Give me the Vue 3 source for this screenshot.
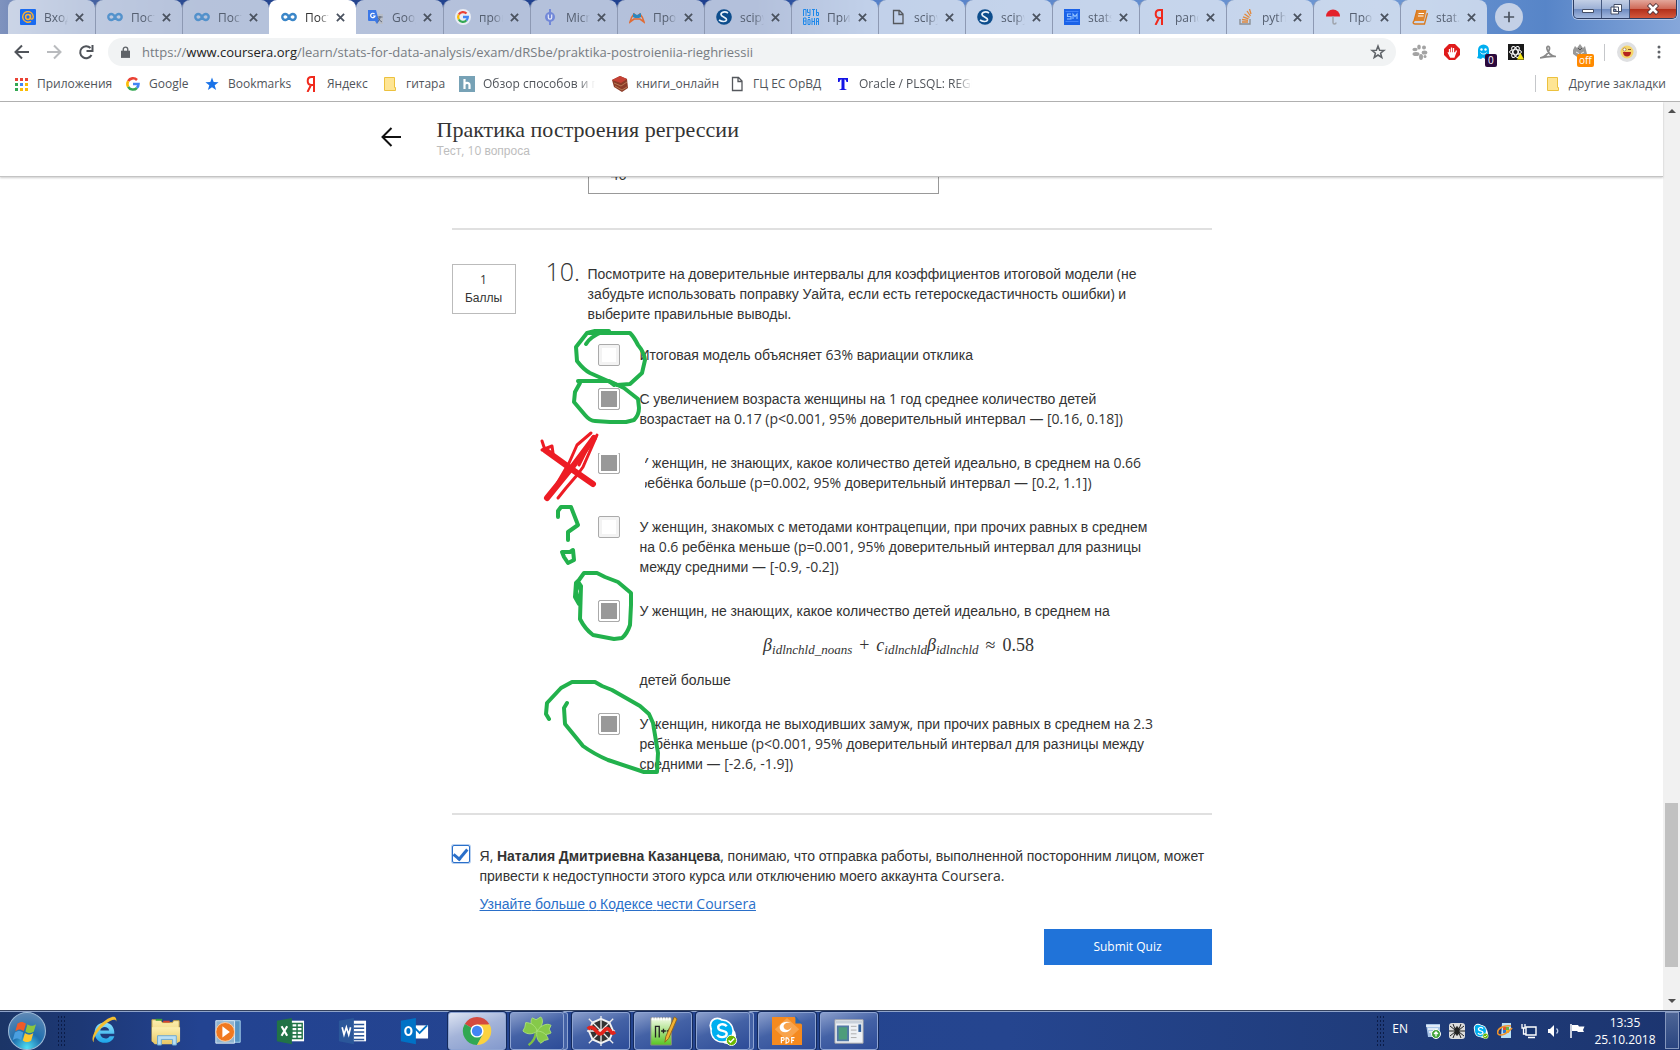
<script setup>
import { ref } from 'vue'

const tabs = [
  { icon: 'mail', title: 'Входящие' },
  { icon: 'coursera', title: 'Построение', dim: true },
  { icon: 'coursera', title: 'Построение', dim: true },
  { icon: 'coursera', title: 'Построение', active: true },
  { icon: 'translate', title: 'Google' },
  { icon: 'googlec', title: 'проверка' },
  { icon: 'micro', title: 'Micro' },
  { icon: 'wings', title: 'Прог' },
  { icon: 'scipy', title: 'scipy.stats' },
  { icon: 'put', title: 'Пример' },
  { icon: 'page', title: 'scipy.stats' },
  { icon: 'scipy', title: 'scipy.stats' },
  { icon: 'sm', title: 'statsmodels' },
  { icon: 'yandex', title: 'pandas' },
  { icon: 'stack', title: 'python' },
  { icon: 'umbrella', title: 'Прог' },
  { icon: 'book', title: 'stat.' }
]

const bookmarks = [
  { icon: 'apps', title: 'Приложения', w: 71 },
  { icon: 'google', title: 'Google', w: 38 },
  { icon: 'star', title: 'Bookmarks', w: 58 },
  { icon: 'yandex', title: 'Яндекс', w: 38 },
  { icon: 'folder', title: 'гитара', w: 36 },
  { icon: 'habr', title: 'Обзор способов и протоколов', w: 112, fade: true },
  { icon: 'books', title: 'книги_онлайн', w: 76 },
  { icon: 'page', title: 'ГЦ ЕС ОрВД', w: 65 },
  { icon: 'tee', title: 'Oracle / PLSQL: REGEXP', w: 113, fade: true }
]

const question =
  'Посмотрите на доверительные интервалы для коэффициентов итоговой модели (не забудьте использовать поправку Уайта, если есть гетероскедастичность ошибки) и выберите правильные выводы.'

const options = ref([
  { checked: false, text: 'Итоговая модель объясняет 63% вариации отклика' },
  { checked: true, text: 'С увеличением возраста женщины на 1 год среднее количество детей возрастает на 0.17 (p<0.001, 95% доверительный интервал — [0.16, 0.18])' },
  { checked: true, text: 'У женщин, не знающих, какое количество детей идеально, в среднем на 0.66 ребёнка больше (p=0.002, 95% доверительный интервал — [0.2, 1.1])' },
  { checked: false, text: 'У женщин, знакомых с методами контрацепции, при прочих равных в среднем на 0.6 ребёнка меньше (p=0.001, 95% доверительный интервал для разницы между средними — [-0.9, -0.2])' },
  { checked: true, text: 'У женщин, не знающих, какое количество детей идеально, в среднем на', formula: true, tail: 'детей больше' },
  { checked: true, text: 'У женщин, никогда не выходивших замуж, при прочих равных в среднем на 2.3 ребёнка меньше (p<0.001, 95% доверительный интервал для разницы между средними — [-2.6, -1.9])' }
])
const pledge = [
  { text: 'Я, ' },
  { text: 'Наталия Дмитриевна Казанцева', bold: true },
  { text: ', понимаю, что отправка работы, выполненной посторонним лицом, может привести к недоступности этого курса или отключению моего аккаунта Coursera.' }
]
const previous = ref('46')
const agreed = ref(true)
const url = 'https://www.coursera.org/learn/stats-for-data-analysis/exam/dRSbe/praktika-postroieniia-rieghriessii'

// Cyrillic runs and everything else are set in different families
function runs(text) {
  return text.match(/[А-Яа-яЁё]+|[^А-Яа-яЁё]+/g).map(t => ({ t, cyr: /[А-Яа-яЁё]/.test(t) }))
}
const pledgeRuns = pledge.flatMap(p => runs(p.text).map(r => ({ ...r, bold: p.bold })))

const extensions = ['paw', 'adblock', 'ghost', 'react', 'acrobat', 'wolf']
const pinned = ['ie', 'explorer', 'wmp', 'excel', 'word', 'outlook']
const running = [
  { icon: 'chrome', active: true },
  { icon: 'clover', stacked: true },
  { icon: 'spider' },
  { icon: 'npp' },
  { icon: 'skype', stacked: true },
  { icon: 'foxit' },
  { icon: 'window' }
]
const tray = ['tsync', 'tspider', 'skype', 'tflag7', 'tnet', 'tsound', 'tflag']
</script>

<template>
  <div class="screen">
    <svg class="defs" aria-hidden="true">
      <defs>
        <radialGradient id="orb" cx="50%" cy="95%" r="90%"><stop offset="0" stop-color="#4fe0f5" /><stop offset=".45" stop-color="#1e6fae" /><stop offset="1" stop-color="#5b86b4" /></radialGradient>
        <linearGradient id="ieg" x1="0" y1="0" x2="0" y2="1"><stop offset="0" stop-color="#8fe1fb" /><stop offset="1" stop-color="#1ba4ea" /></linearGradient>
        <linearGradient id="fold" x1="0" y1="0" x2="0" y2="1"><stop offset="0" stop-color="#fdf0b0" /><stop offset="1" stop-color="#e8c765" /></linearGradient>
        <linearGradient id="nppg" x1="0" y1="0" x2="0" y2="1"><stop offset="0" stop-color="#f4fbe8" /><stop offset="1" stop-color="#58c421" /></linearGradient>
      </defs>
      <symbol id="mail" viewBox="0 0 16 16"><rect width="16" height="16" rx="1" fill="#1a6bf0" /><circle cx="8" cy="8" r="2.4" fill="none" stroke="#ffb02e" stroke-width="1.5" /><path d="M10.5 5.500v3.600c0 1.700 2.800 1.400 2.800-1.400A5.300 5.300 0 1 0 11 12.300" fill="none" stroke="#ffb02e" stroke-width="1.4" /></symbol>
      <symbol id="coursera" viewBox="0 0 16 16"><path d="M8 8C6.800 5.800 5.800 5 4.300 5a3 3 0 0 0 0 6C5.800 11 6.800 10.200 8 8s2.200-3 3.700-3a3 3 0 0 1 0 6C10.200 11 9.200 10.200 8 8" fill="none" stroke="#3b86c8" stroke-width="2.400" /></symbol>
      <symbol id="translate" viewBox="0 0 16 16"><rect x="7" y="5" width="8" height="10" fill="#b9bec8" /><path d="M0 1h8l3 11H1a1 1 0 0 1-1-1zM7 12h4l-2 3z" fill="#3b78e7" /><path d="M6.500 5A2.200 2.200 0 1 0 7 7H5" fill="none" stroke="#fff" stroke-width="1.200" /><path d="M9.500 8h5M12 7v1c0 2-1 4-2.500 5M10.500 9c.5 2 2 3 3.500 4" stroke="#5a6270" fill="none" stroke-width=".9" /></symbol>
      <symbol id="google" viewBox="0 0 16 16"><g fill="none" stroke-width="2.600"><path d="M3.200 5.200A5.500 5.500 0 0 1 12 4" stroke="#ea4335" /><path d="M3.200 10.800a5.500 5.500 0 0 1 0-5.600" stroke="#fbbc05" /><path d="M12 11.800a5.500 5.500 0 0 1-8.800-1" stroke="#34a853" /><path d="M8 8h5.500c0 1.700-.5 2.800-1.600 3.800" stroke="#4285f4" /></g></symbol>
      <symbol id="googlec" viewBox="0 0 16 16"><circle cx="8" cy="8" r="8" fill="#e9edf4" /><use href="#google" x="1" y="1" width="14" height="14" /></symbol>
      <symbol id="micro" viewBox="0 0 16 16"><path d="M8 0v16" fill="none" stroke="#7288d8" stroke-width="2" /><circle cx="8" cy="8" r="5" fill="#7288d8" /><path d="M6.300 5.500v3a1.700 1.700 0 0 0 3.400 0v-3" fill="none" stroke="#e6eaf8" stroke-width="1.200" /></symbol>
      <symbol id="wings" viewBox="0 0 16 16"><path d="M1 13c1-4 2-6 4-8l3 3 3-3c2 2 3 4 4 8l-4-3H5z" fill="none" stroke="#e06c35" stroke-width="1.600" /><path d="M4 8V4l4 2 4-2v4l-2 1H6z" fill="#2b86bd" /></symbol>
      <symbol id="scipy" viewBox="0 0 16 16"><circle cx="8" cy="8" r="7.800" fill="#0d4d8c" /><path d="M12 4C9 2 5 3 5 5.500S11 8 10.500 11C10 13 6 13 3 11" fill="none" stroke="#e8f1fa" stroke-width="1.700" /></symbol>
      <symbol id="put" viewBox="0 0 16 16"><path fill="none" stroke="#1e88ea" d="M.5 7V.5h2.500V7M4.500 0v3.500h2M7 0v6.500H4.500M9 .5h3M10.500 .5V7M13.500 0v6.500h2V3.500h-2M.5 9v6.500H3v-6.500H.5M.5 12H3M5 15.500v-5h2v5H5M5 8.500h2M9 9v7M9 12.500h2.500M11.500 9v7M13.500 16V9.500h2V16M13.500 12.500h2" /></symbol>
      <symbol id="page" viewBox="0 0 16 16"><path d="M3.500 1.500h6l3.500 3.500v9.500H3.500zM9 1.500V5.500h4" fill="none" stroke="#55585d" stroke-width="1.300" /></symbol>
      <symbol id="sm" viewBox="0 0 16 16"><rect width="16" height="16" fill="#1a62e8" /><path d="M7 5H3.500v2.500H7V10H3M9 10V5l2 2.500L13 5v5" fill="none" stroke="#8fc0ff" stroke-width="1.100" /><path d="M1.500 12.500h13M1.500 2.500h13" stroke="#4d8cff" stroke-width=".8" /></symbol>
      <symbol id="yandex" viewBox="0 0 16 16"><path d="M11 16V1H8.500C6 1 4.700 2.500 4.700 5S6 9 8.500 9H11M8 9l-3.500 7" fill="none" stroke="#f0291c" stroke-width="2" /></symbol>
      <symbol id="stack" viewBox="0 0 16 16"><path d="M2 10v5h10v-5" fill="none" stroke="#8b8f95" stroke-width="1.400" /><path d="M4 13h6M4 10.500l6 .8M5 7.800l5.500 2M6.500 5l5 3.500M9 2l3.500 5M11.500 0l1.500 5" stroke="#e0883c" stroke-width="1.300" /></symbol>
      <symbol id="umbrella" viewBox="0 0 16 16"><path d="M1 7.500a7 7 0 0 1 14 0z" fill="#e3202b" /><path d="M8 7v6.500c0 2 3 2 3 0" stroke="#9fa4ac" stroke-width="1.500" fill="none" /></symbol>
      <symbol id="book" viewBox="0 0 16 16"><path d="M5 1h9.500L12 12H2z" fill="#e0852c" /><path d="M5 1L2 12c-1.500 1.500-1 3 1 3h9.500l3-11" fill="none" stroke="#d9781b" stroke-width="1.300" /><path d="M6.500 4.500H12M6 7h5.500" stroke="#fff" /></symbol>
      <symbol id="apps" viewBox="0 0 16 16"><path fill="#ea4335" d="M2 2h3v3H2zM7 2h3v3H7zM12 2h3v3h-3z" /><path fill="#34a853" d="M2 7h3v3H2zM2 12h3v3H2z" /><path fill="#4285f4" d="M7 7h3v3H7z" /><path fill="#fbbc05" d="M12 7h3v3h-3zM7 12h3v3H7zM12 12h3v3h-3z" /></symbol>
      <symbol id="star" viewBox="0 0 16 16"><path d="M8 1.500l1.700 4.600 4.900.2-3.900 3 1.400 4.800L8 11.300l-4.100 2.800 1.400-4.800-3.900-3 4.900-.2z" fill="#1a73e8" /></symbol>
      <symbol id="folder" viewBox="0 0 16 16"><path d="M2.500 1.500h10v10h1v3h-11z" fill="#fee594" stroke="#ecc13e" /></symbol>
      <symbol id="habr" viewBox="0 0 16 16"><rect width="16" height="16" fill="#77a2b6" /><path d="M5.500 3v10M5.500 9c0-2.500 5-3 5 .2V13" fill="none" stroke="#fff" stroke-width="2.200" /></symbol>
      <symbol id="books" viewBox="0 0 16 16"><path d="M0 4l8-4 7 3 1 9-6 4-8-5z" fill="#8c3b28" /><path d="M0 4l8-4 7 3-6 4z" fill="#c54235" /><path d="M3 10l7 4 5-3M2 7l7 3 6-4" fill="none" stroke="#c08a5e" stroke-width=".8" /></symbol>
      <symbol id="tee" viewBox="0 0 16 16"><path d="M3 2h10v4h-1.500C11 4 10.500 3.500 9.500 3.500V12c0 1 .5 1.300 2 1.500V14h-7v-.5c1.500-.2 2-.5 2-1.500V3.500C5.500 3.500 5 4 4.500 6H3z" fill="#1414e6" /></symbol>
      <symbol id="paw" viewBox="0 0 16 16"><g fill="#a3a3a3"><ellipse cx="7" cy="3" rx="1.800" ry="2.600" /><circle cx="12" cy="3.500" r="2" /><ellipse cx="3" cy="5.500" rx="2.600" ry="1.700" /><ellipse cx="4" cy="10" rx="3.500" ry="2" /><ellipse cx="12.500" cy="8.500" rx="2.800" ry="2" /><ellipse cx="9" cy="13" rx="2" ry="3" /><circle cx="13" cy="12.500" r="1.500" /></g></symbol>
      <symbol id="adblock" viewBox="0 0 16 16"><path d="M5 0h6l5 5v6l-5 5H5l-5-5V5z" fill="#e01b1b" /><path d="M5.500 9V5M7.500 9V3.500M9.500 9V4M4.500 9h7L10 13H6.500zM11.500 9l1-2.500" stroke="#fff" stroke-width="1.300" fill="#fff" /></symbol>
      <symbol id="ghost" viewBox="0 0 16 16"><path d="M2 12V6a5.500 5.500 0 0 1 11 0v9l-2-1.500-2 1.500-2-1.500-2 1.500-4-1z" fill="#00aef0" /><circle cx="5.500" cy="5.500" r="1.200" fill="#fff" /><circle cx="9.500" cy="5.500" r="1.200" fill="#fff" /><path d="M4.500 8.500c1.500 2 4.500 2 6 0" stroke="#fff" fill="none" /></symbol>
      <symbol id="react" viewBox="0 0 16 16"><rect width="16" height="16" fill="#1a1a1a" /><g fill="none" stroke="#fff"><ellipse cx="7.500" cy="8" rx="6" ry="2.400" /><ellipse cx="7.500" cy="8" rx="6" ry="2.400" transform="rotate(60 7.500 8)" /><ellipse cx="7.500" cy="8" rx="6" ry="2.400" transform="rotate(120 7.500 8)" /></g><path d="M12.500 9l3.500 6.500H9z" fill="#f5e614" /></symbol>
      <symbol id="acrobat" viewBox="0 0 16 16"><path d="M0 14c5-1 8.500-5 9.500-9 .5-3.500-3.500-3.500-2.500 0 1 4 4.500 7 9 7.500-5-.5-10 0-16 1.500z" fill="none" stroke="#8a8a8a" stroke-width="1.700" /></symbol>
      <symbol id="wolf" viewBox="0 0 16 16"><path d="M1 6l2-4 2 2 3-4 3 4 2-2 1 4 1 4-7 5-7-5z" fill="#999" /><path d="M4 8l3 1.500M12 8L9 9.500" stroke="#eee" /><path d="M6 4l2 2 2-2" stroke="#555" fill="none" /></symbol>
      <symbol id="ie" viewBox="0 0 32 32"><path d="M27 19H12c.5 5.500 8 6.500 10 2.500h5C24 32 6 31 6 17.500 6 3 28 3 27 19zM12 15.500h9.500c-.5-5-9-5-9.500 0z" fill="url(#ieg)" /><path d="M5 28c-4-4 2-16 12-23S30 1 29 6c0-4-6-2-12 3S4 23 5 28z" fill="#f4bf31" /></symbol>
      <symbol id="explorer" viewBox="0 0 32 32"><path d="M1 4h9l2 3h11l1-2h6v22H1z" fill="url(#fold)" stroke="#c9a545" /><path d="M5 3h7v2H5z" fill="#3f9e3a" /><path d="M13 5h7v2h-7z" fill="#d9442e" /><path d="M1 12h30v15l-5 3H4l-3-3z" fill="url(#fold)" /><path d="M7 31V21h20v10h-4v-6H11v6z" fill="#b9dff5" stroke="#6ba7d0" /></symbol>
      <symbol id="wmp" viewBox="0 0 32 32"><path d="M11 5h18v23H11z" fill="#5794c3" stroke="#a9d4ef" /><path d="M3 5h20v24H3z" fill="#8fb4d0" stroke="#dcebf6" /><circle cx="13" cy="17" r="10" fill="#f07920" stroke="#fbd3b0" /><path d="M10 11l8 6-8 6z" fill="#fff" /></symbol>
      <symbol id="excel" viewBox="0 0 32 32"><path d="M15 5h16v22H15z" fill="#fff" /><path d="M18 8h11v16H18zM18 12h11M18 16h11M18 20h11M23.500 8v16" fill="none" stroke="#217346" stroke-width="1.500" /><path d="M2 5l16-3v28L2 27z" fill="#217346" /><path d="M7 11l6 10M13 11L7 21" stroke="#fff" stroke-width="2.300" /></symbol>
      <symbol id="word" viewBox="0 0 32 32"><path d="M15 5h16v22H15z" fill="#fff" /><path d="M18 9h11M18 13h11M18 17h11M18 21h11M18 25h11" stroke="#2b579a" stroke-width="1.500" /><path d="M2 5l16-3v28L2 27z" fill="#2b579a" /><path d="M5.500 12l2 8 2.500-8 2.500 8 2-8" fill="none" stroke="#fff" stroke-width="1.800" /></symbol>
      <symbol id="outlook" viewBox="0 0 32 32"><path d="M15 10h16v14H15z" fill="#fff" /><path d="M17 13l5 5 8-8" fill="none" stroke="#0072c6" stroke-width="2" /><path d="M2 5l16-3v28L2 27z" fill="#0072c6" /><ellipse cx="10" cy="16" rx="3.300" ry="4.300" fill="none" stroke="#fff" stroke-width="2.300" /></symbol>
      <symbol id="chrome" viewBox="0 0 32 32"><path d="M16 16L3 8.500A15 15 0 0 1 29 8.500z" fill="#d44a3f" /><path d="M16 16L3 8.500A15 15 0 0 0 16 31l6-11z" fill="#31a853" /><path d="M16 31A15 15 0 0 0 29.500 9H16l6 11z" fill="#fbd23f" /><circle cx="16" cy="16" r="7" fill="#fff" /><circle cx="16" cy="16" r="5.500" fill="#4285f4" /></symbol>
      <symbol id="clover" viewBox="0 0 32 32"><path d="M15 17c-1 7-3 10-8 14" fill="none" stroke="#7fc043" stroke-width="2.500" /><g fill="#86c94a" stroke="#a9df78"><path d="M16 16C10 13 8 6 11 2l4 2 5-3c4 4 1 11-4 15z" /><path d="M16 16C12 20 5 20 1 16l2-4 1-5c6 0 11 4 12 9z" /><path d="M16 16c4-6 11-9 15-6l-2 4 2 4c-5 3-12 2-15-2z" /><path d="M16 16c6 0 11 4 12 9l-4 1-4 3c-4-3-5-8-4-13z" /></g></symbol>
      <symbol id="spider" viewBox="0 0 32 32"><path d="M16 3l9 4 4 9-4 9-9 4-9-4-4-9 4-9z" fill="#333" stroke="#f2f2f2" stroke-width="2" /><path d="M16 0v32M3 3l26 26M29 3L3 29M1 16h30" stroke="#eee" stroke-width="1.400" /><path d="M2 14c3-3 6-2 9 2s5 4 8 0 5-3 7 0 2 3 5 1" fill="none" stroke="#e3241c" stroke-width="4" /></symbol>
      <symbol id="npp" viewBox="0 0 32 32"><path d="M3 2h22v29H3z" fill="url(#nppg)" stroke="#888" /><path d="M4 3h20" stroke="#fff" stroke-width="3" stroke-dasharray="2 1" /><path d="M8 23V11h4v12M14 16h5M16.500 13.500v5M20 16h5M22.500 13.500v5" fill="none" stroke="#222" stroke-width="1.400" /><path d="M28 1l3 2-9 21-4 4 1-6z" fill="#f2b233" stroke="#8e651c" /></symbol>
      <symbol id="skype" viewBox="0 0 32 32"><circle cx="10" cy="10" r="8.500" fill="#fff" /><circle cx="21" cy="21" r="9" fill="#fff" /><circle cx="15" cy="16" r="12.500" fill="#fff" /><circle cx="10" cy="10" r="6.500" fill="#00aff0" /><circle cx="15" cy="16" r="11" fill="#00aff0" /><path d="M20 11c-3-4-10-2-9 2s9 2 9 6-8 5-10 1" fill="none" stroke="#fff" stroke-width="2.500" /><circle cx="25" cy="26" r="5.500" fill="#6bb700" stroke="#fff" /><path d="M22 26l2 2 4-4" stroke="#fff" fill="none" stroke-width="1.500" /></symbol>
      <symbol id="foxit" viewBox="0 0 32 32"><path d="M0 1h24l8 8v22H0z" fill="#f58a1f" /><path d="M25 0l7 8h-7z" fill="#2a67b1" /><path d="M16 2l13 12-13 12L3 14z" fill="#f8a44d" /><path d="M20 7C12 4 6 10 9 15c3 4 10 3 12-3-2 3-6 4-8 1s1-7 7-6z" fill="#fff" /><path d="M10 29v-6h2q2 1.500 0 3h-2M15 23v6q4-1 3-4-1-2-3-2M21 29v-6h3M21 26h2.500" fill="none" stroke="#fff" stroke-width="1.200" /></symbol>
      <symbol id="window" viewBox="0 0 32 32"><path d="M1 4h30v25H1z" fill="#eef1f5" stroke="#aaa" /><path d="M2 5h28v3H2z" fill="#c8d0da" /><path d="M4 11h11v15H4z" fill="#4e9d7b" stroke="#5279a5" stroke-width="2" /><path d="M18 11h6M18 15h6M18 19h6M18 23h6" stroke="#aaa" /><path d="M26 9h3v8h-3z" fill="#315f9c" /></symbol>
      <symbol id="tsync" viewBox="0 0 16 16"><path d="M1 1h14v10l-3 3H3z" fill="#a8c5e8" /><path d="M1 3h14M3 6h10M4 9h8" stroke="#f3f6fa" stroke-width="1.500" /><circle cx="11" cy="11" r="4.500" fill="#40a339" stroke="#fff" /><path d="M11 13.500v-4M9 11l2-2 2 2" stroke="#fff" fill="none" stroke-width="1.300" /></symbol>
      <symbol id="tspider" viewBox="0 0 16 16"><rect width="16" height="16" rx="3" fill="#dcdcdc" /><path d="M8 3v10M1 3l5 4M15 3l-5 4M0 8h16M1 13l5-4M15 13l-5-4M4 1l2 5M12 1l-2 5M4 15l2-5M12 15l-2-5" stroke="#222" /><ellipse cx="8" cy="8" rx="2.500" ry="4" fill="#222" /></symbol>
      <symbol id="tflag7" viewBox="0 0 16 16"><path d="M5 0h9v15H4z" fill="#b9dff5" /><path d="M6 4h3v3H6z" fill="#e3522e" /><path d="M9 4h3v3H9z" fill="#6cb33e" /><path d="M6 7h3v3H6z" fill="#2c78cf" /><path d="M9 7h3v3H9z" fill="#f2bc22" /><path d="M1 11C-1 6 6 2 14 3M1 11c3 3 10-1 14-6" fill="none" stroke="#f0932b" stroke-width="1.600" /></symbol>
      <symbol id="tnet" viewBox="0 0 16 16"><path d="M5 4h10v8H5zM7 14.500h7" fill="#17346e" stroke="#fff" stroke-width="1.400" /><path d="M1 1v4h3V1M2.500 5v6H5" fill="none" stroke="#fff" stroke-width="1.300" /></symbol>
      <symbol id="tsound" viewBox="0 0 16 16"><path d="M3 6h2l4-4v12l-4-4H3z" fill="#fff" /><path d="M11.500 5.500c1.500 1.500 1.500 3.500 0 5" stroke="#b9c9e5" fill="none" stroke-width="1.300" /></symbol>
      <symbol id="tflag" viewBox="0 0 16 16"><path d="M2 1v14" stroke="#fff" stroke-width="1.500" /><path d="M3 2h6l1 1.500h5.500L14 7l1 2H9L8 8H3z" fill="#fff" /></symbol>
    </svg>

    <div class="tabstrip">
      <div v-for="(t, i) in tabs" :key="i" class="tab" :class="{ active: t.active, dim: t.dim }">
        <svg class="fav"><use :href="'#' + t.icon" /></svg>
        <span class="tabtitle">{{ t.title }}</span>
        <button class="close" aria-label="Закрыть"><svg viewBox="0 0 10 10"><path d="M1 1l8 8M9 1L1 9" /></svg></button>
      </div>
      <button class="newtab" aria-label="Новая вкладка"><svg viewBox="0 0 14 14"><path d="M7 1v12M1 7h12" /></svg></button>
      <div class="wincontrols">
        <button aria-label="Свернуть"><svg viewBox="0 0 14 12"><path d="M1.500 6.500h11v3h-11z" fill="#fff" stroke="#444e66" /></svg></button>
        <button aria-label="Развернуть"><svg viewBox="0 0 14 12"><path d="M5 1.500h7.500v7H5zM2 4h7.500v7H2z" fill="#fff" stroke="#444e66" /><path d="M4.500 6.500h2.500v2H4.500z" fill="#7d93bd" stroke="#444e66" /></svg></button>
        <button class="winclose" aria-label="Закрыть окно"><svg viewBox="0 0 14 12"><path d="M2.500 1.500l9 9M11.500 1.500l-9 9" stroke="#54343a" stroke-width="4.500" /><path d="M3 2l8 8M11 2l-8 8" stroke="#fff" stroke-width="2.600" /></svg></button>
      </div>
    </div>

    <div class="toolbar">
      <button class="nav" aria-label="Назад"><svg viewBox="0 0 16 16"><path d="M15 8H2M8 1.500L1.500 8 8 14.500" /></svg></button>
      <button class="nav off" aria-label="Вперёд"><svg viewBox="0 0 16 16"><path d="M1 8h13M8 1.500L14.500 8 8 14.500" /></svg></button>
      <button class="nav" aria-label="Обновить"><svg viewBox="0 0 16 16"><path d="M13.500 11A6 6 0 1 1 12.500 4M14.500 1v6h-6" /></svg></button>
      <div class="omnibox">
        <svg class="lock" viewBox="0 0 10 14"><path d="M0 5h10v8H0z" fill="#5f6368" /><path d="M2.500 6V3.500a2.500 2.500 0 0 1 5 0V6" fill="none" stroke="#5f6368" stroke-width="1.500" /></svg>
        <span class="url">{{ url.slice(0, 8) }}<b>{{ url.slice(8, 24) }}</b>{{ url.slice(24) }}</span>
        <svg class="bmstar" viewBox="0 0 16 16"><path d="M8 2l1.600 4.200 4.500.2-3.500 2.800 1.200 4.300L8 11l-3.800 2.500 1.200-4.300-3.500-2.800 4.500-.2z" fill="none" stroke="#5f6368" stroke-width="1.500" /></svg>
      </div>
      <div class="extensions">
        <span v-for="e in extensions" :key="e" class="ext">
          <svg><use :href="'#' + e" /></svg>
          <span v-if="e === 'ghost'" class="badge zero">0</span>
          <span v-if="e === 'wolf'" class="badge">off</span>
        </span>
      </div>
      <span class="vr"></span>
      <svg class="avatar" viewBox="0 0 20 20"><circle cx="10" cy="10" r="10" fill="#dfe0e2" /><circle cx="10" cy="10" r="6.500" fill="#f5d56a" /><path d="M6 10h8c0 6-8 6-8 0z" fill="#b5251f" /><circle cx="7.500" cy="7.500" r="1.500" fill="#fff" stroke="#8b5a2b" stroke-width=".6" /><path d="M11 7.500h3" stroke="#8b5a2b" /></svg>
      <svg class="kebab" viewBox="0 0 4 16"><circle cx="2" cy="3" r="1.500" /><circle cx="2" cy="8" r="1.500" /><circle cx="2" cy="13" r="1.500" /></svg>
    </div>

    <nav class="bookmarks">
      <a v-for="b in bookmarks" :key="b.title" href="#" class="bm">
        <svg class="fav"><use :href="'#' + b.icon" /></svg>
        <span :class="{ fade: b.fade }" :style="{ width: b.w + 'px' }">{{ b.title }}</span>
      </a>
      <span class="vr push"></span>
      <a href="#" class="bm other"><svg class="fav"><use href="#folder" /></svg><span>Другие закладки</span></a>
    </nav>

    <div class="viewport">
      <div class="pagebody">
        <header class="quizhead">
          <div class="headinner">
            <a href="#" class="back" aria-label="Назад к курсу"><svg viewBox="0 0 20 20"><path d="M20 10H2M10.500 1L1.500 10l9 9" /></svg></a>
            <div>
              <h1>Практика построения регрессии</h1>
              <p class="sub"><span v-for="(r, i) in runs('Тест, 10 вопроса')" :key="i" :class="{ cyr: r.cyr }">{{ r.t }}</span></p>
            </div>
          </div>
        </header>

        <main class="quiz">
          <div class="column">
            <input v-model="previous" class="answer" type="text" aria-label="Ответ на вопрос 9" />
            <hr />
            <section class="question">
              <div class="points"><span>1</span><span class="cyr">Баллы</span></div>
              <div class="number">10.</div>
              <fieldset>
                <legend><span v-for="(r, i) in runs(question)" :key="i" :class="{ cyr: r.cyr }">{{ r.t }}</span></legend>
                <label v-for="(o, k) in options" :key="k" class="option">
                  <input v-model="o.checked" type="checkbox" />
                  <span class="otext">
                    <span v-for="(r, i) in runs(o.text)" :key="i" :class="{ cyr: r.cyr }">{{ r.t }}</span>
                    <span v-if="o.formula" class="formula"><i>β</i><sub>idlnchld_noans</sub><span class="op">+</span><i>c</i><sub>idlnchld</sub><i>β</i><sub>idlnchld</sub><span class="op">≈</span>0.58</span>
                    <span v-if="o.tail" class="cyr tail">{{ o.tail }}</span>
                  </span>
                </label>
              </fieldset>
              <svg class="marks" viewBox="452 230 760 583" aria-hidden="true">
                <path class="rubbed" d="M590 449h44v4h-44zM630 452h15v40h-15zM645 463h5v8h-5zM645 474h3v8h-3z" />
                <g class="pen">
                  <path d="M586 344Q590 337 602 332L609 331 595 331 587 333 576 347 577 361Q584 370 590 373L617 385 630 384 642 373 645 360Q644 352 638 345 634 337 630 333L612 333 587 333" />
                  <path d="M614 385L609 381 578 381 580 383 575 392 574 402 585 415Q590 421 595 421L610 422 626 422 634 420Q639 415 639 408L638 399 624 388 609 381" />
                  <path d="M558 517v-6l3-4h10l7 18-10 7v8" />
                  <path d="M562 552h8l3-2 1 10-6 3-4-6z" />
                  <path d="M579 604l-4-7 1-14 3-3 5-7h13l8 4 13 5 13 11v12l-1 20q-3 9-8 13l-8 1-21-4q-8-6-13-16l1-33-2-3-3 8 2 10" />
                  <path d="M549 719l-3-5 1-11 14-15 11-6h23l7 4 10 4 28 16 9 8 4 9 5 30-1 19h-13l-36-12q-14-6-25-14l-18-22-1-16 3-5" />
                </g>
                <g class="pen red">
                  <path class="thin" d="M542 441l3 9 9 6M542 450l10-4 1 7M591 433l-14 12-8 18-14 24M597 435l-14 32-5 7-12 14-8 10M593 437l-14 28" />
                  <path class="heavy" d="M545 450l25 18 23 16M594 438L573 466 547 498" />
                </g>
              </svg>
            </section>
            <hr />
            <div class="honor">
              <input id="agree" v-model="agreed" type="checkbox" />
              <div>
                <label for="agree"><span v-for="(r, i) in pledgeRuns" :key="i" :class="{ cyr: r.cyr, bold: r.bold }">{{ r.t }}</span></label>
                <a href="#"><span v-for="(r, i) in runs('Узнайте больше о Кодексе чести Coursera')" :key="i" :class="{ cyr: r.cyr }">{{ r.t }}</span></a>
              </div>
            </div>
            <button class="submit">Submit Quiz</button>
          </div>
        </main>
      </div>
      <div class="scrollbar">
        <svg viewBox="0 0 8 4"><path d="M0 4l4-4 4 4z" /></svg>
        <div class="track"><div class="thumb"></div></div>
        <svg viewBox="0 0 8 4"><path d="M0 0l4 4 4-4z" /></svg>
      </div>
    </div>

    <footer class="taskbar">
      <button class="start" aria-label="Пуск"><svg viewBox="0 0 36 36"><circle cx="18" cy="18" r="17.500" fill="url(#orb)" stroke="#9dbbd8" /><path d="M9 11c3-2 5-2 8 0l-2 7c-3-2-5-2-8 0z" fill="#ee5b2a" /><path d="M18.500 11.500c3 2 5 2 8 0l-2 7c-3 2-5 2-8 0z" fill="#8cc63f" /><path d="M6.500 19.500c3-2 5-2 8 0l-2 7c-3-2-5-2-8 0z" fill="#4a9fe0" /><path d="M16 20c3 2 5 2 8 0l-2 7c-3 2-5 2-8 0z" fill="#fdc72f" /></svg></button>
      <span class="grip"></span>
      <div class="pins">
        <button v-for="p in pinned" :key="p" class="pin" :aria-label="p"><svg><use :href="'#' + p" /></svg></button>
      </div>
      <button v-for="r in running" :key="r.icon" class="run" :class="{ active: r.active, stacked: r.stacked }" :aria-label="r.icon"><svg><use :href="'#' + r.icon" /></svg></button>
      <span class="grip trayside"></span>
      <span class="lang">EN</span>
      <div class="tray"><svg v-for="t in tray" :key="t"><use :href="'#' + t" /></svg></div>
      <div class="clock"><span>13:35</span><span>25.10.2018</span></div>
      <button class="desktop" aria-label="Показать рабочий стол"></button>
    </footer>
  </div>
</template>

<style>
body {
  background: #fff;
}
</style>

<style scoped>
* {
  box-sizing: border-box;
}
.screen {
  display: flex;
  flex-direction: column;
  height: 100vh;
  overflow: hidden;
  font-family: "Open Sans", sans-serif;
  font-size: 12px;
  color: #333;
}
.defs {
  position: absolute;
  width: 0;
  height: 0;
}
button {
  padding: 0;
  border: 0;
  background: none;
  font: inherit;
}
.tabstrip {
  display: flex;
  flex: none;
  height: 34px;
  padding-left: 8px;
  background: linear-gradient(90deg, #7f93be 0, #4a66a4 80px, #27478f 200px, #1d3f8f 45%, #5580c8 52%, #6f98d3 82%, #5785c8 92%, #86a7da 100%);
}
.tab {
  display: flex;
  align-items: center;
  flex: none;
  width: 87px;
  padding-left: 11px;
  border-left: 1px solid #8d99b3;
  border-radius: 8px 8px 0 0;
  background: rgba(232, 237, 245, .74);
}
.tab:first-child,
.tab.active,
.tab.active + .tab {
  border-left-color: transparent;
}
.tab.active {
  background: #fff;
}
.tab.dim .fav {
  opacity: .8;
}
.fav {
  flex: none;
  width: 16px;
  height: 16px;
}
.tabtitle {
  width: 24px;
  margin-left: 8px;
  overflow: hidden;
  white-space: nowrap;
  color: #555f70;
  mask-image: linear-gradient(90deg, #000 60%, transparent);
}
.active .tabtitle {
  color: #333;
}
.close {
  width: 9px;
  height: 9px;
  margin-left: 7px;
  display: flex;
}
.close path,
.newtab path {
  fill: none;
  stroke: #4b5360;
  stroke-width: 2;
}
.newtab {
  width: 28px;
  height: 28px;
  margin: 3px 0 0 8px;
  border-radius: 50%;
  background: #c3d0e6;
}
.newtab svg {
  display: block;
  width: 12px;
  margin: auto;
}
.wincontrols {
  display: flex;
  width: 104px;
  height: 19px;
  margin: 0 3px 0 auto;
  border: 1px solid #2c3d62;
  border-top: 0;
  border-radius: 0 0 5px 5px;
  overflow: hidden;
  box-shadow: 0 0 0 1px #b4c7e8;
}
.wincontrols button {
  width: 28px;
  border-right: 1px solid #44577e;
  background: linear-gradient(#c3cfe6, #9db1d6 48%, #6e8bc0 52%, #a4b9df);
}
.wincontrols svg {
  display: block;
  width: 14px;
  margin: auto;
}
.wincontrols .winclose {
  flex: 1;
  border: 0;
  background: linear-gradient(#e3a79b, #cf6a58 48%, #b3301b 52%, #d4583c);
}
.toolbar {
  display: flex;
  align-items: center;
  flex: none;
  height: 36px;
  padding: 0 19px 0 14px;
}
.nav {
  width: 16px;
  height: 16px;
  margin-right: 16px;
}
.nav svg {
  display: block;
}
.nav path {
  fill: none;
  stroke: #50545a;
  stroke-width: 2;
}
.nav.off path {
  stroke: #b9bbbe;
}
.omnibox {
  display: flex;
  align-items: center;
  flex: 1;
  height: 28px;
  margin: 0 16px 0 -2px;
  padding: 0 10px 0 13px;
  border-radius: 14px;
  background: #f1f3f4;
}
.lock {
  width: 9px;
  height: 13px;
}
.url {
  flex: 1;
  margin-left: 12px;
  font-size: 13px;
  color: #777c82;
}
.url b {
  font-weight: 400;
  color: #222;
}
.bmstar {
  width: 16px;
}
.extensions {
  display: flex;
  gap: 16px;
}
.ext {
  position: relative;
  width: 16px;
  height: 16px;
}
.ext svg {
  width: 16px;
  height: 16px;
}
.badge {
  position: absolute;
  left: 5px;
  top: 10px;
  padding: 0 2px;
  border-radius: 2px;
  background: #ff8a00;
  color: #fff;
  font-size: 10px;
  line-height: 13px;
}
.badge.zero {
  left: 9px;
  padding: 0 3px;
  background: #2b0a3d;
}
.vr {
  width: 1px;
  height: 17px;
  margin: 0 12px 0 16px;
  background: #c5c7ca;
}
.avatar {
  width: 20px;
}
.kebab {
  width: 4px;
  height: 16px;
  margin-left: 20px;
  fill: #5f6368;
}
.bookmarks {
  display: flex;
  align-items: center;
  flex: none;
  height: 32px;
  padding: 0 14px 4px 13px;
  border-bottom: 1px solid #b3b3b3;
}
.bm {
  display: flex;
  align-items: center;
  gap: 8px;
  margin-right: 17px;
  color: #50545a;
  text-decoration: none;
  white-space: nowrap;
}
.bm .fade {
  overflow: hidden;
  mask-image: linear-gradient(90deg, #000 85%, transparent);
}
.push {
  margin: 0 9px 0 auto;
}
.bm.other {
  margin-right: 0;
}
.viewport {
  display: flex;
  flex: 1;
  min-height: 0;
}
.pagebody {
  flex: 1;
  display: flex;
  flex-direction: column;
  min-width: 0;
}
.quizhead {
  flex: none;
  height: 75px;
  border-bottom: 1px solid #c4c4c4;
  box-shadow: 0 1px 2px rgba(0, 0, 0, .2);
  z-index: 1;
  background: #fff;
}
.headinner {
  display: flex;
  max-width: 902px;
  margin: 0 auto;
  padding-top: 14px;
}
.back {
  width: 20px;
  height: 20px;
  margin: 11px 36px 0 0;
}
.back path {
  fill: none;
  stroke: #111;
  stroke-width: 2;
}
h1 {
  margin: 0;
  font: 400 22px/28px "Liberation Serif", serif;
}
.sub {
  margin: 0;
  line-height: 14px;
  color: #bdbdbd;
}
.quiz {
  flex: 1;
  min-height: 0;
  overflow: hidden;
  font-size: 14px;
  line-height: 20px;
}
.cyr {
  font-family: "Liberation Sans", sans-serif;
}
.bold {
  font-weight: 700;
}
.column {
  max-width: 760px;
  margin: 0 auto;
}
.answer {
  display: block;
  width: 351px;
  height: 40px;
  margin: -23px 0 0 136px;
  padding: 0 22px;
  border: 1px solid #999;
  font: inherit;
  color: #333;
}
hr {
  height: 2px;
  margin: 34px 0 0;
  border: 0;
  background: #e0e0e0;
}
.question {
  position: relative;
  display: flex;
  height: 583px;
  padding-top: 34px;
}
.question + hr {
  margin: 0;
}
.points {
  display: flex;
  flex-direction: column;
  flex: none;
  width: 64px;
  height: 50px;
  padding-top: 6px;
  border: 1px solid #bbb;
  text-align: center;
  font-size: 12px;
  line-height: 18px;
}
.number {
  flex: none;
  width: 42px;
  margin: -8px 0 0 30px;
  font-size: 25px;
  font-weight: 300;
  line-height: 30px;
}
fieldset {
  flex: 1;
  min-width: 0;
  margin: 0;
  padding: 0 54px 0 0;
  border: 0;
}
legend {
  padding: 0;
  width: 560px;
}
.option {
  display: flex;
  margin-top: 24px;
  padding-left: 10px;
}
legend + .option {
  margin-top: 21px;
}
input[type="checkbox"] {
  flex: none;
  appearance: none;
  width: 22px;
  height: 22px;
  margin: -1px 20px -1px 0;
  border: 1px solid #aaa;
  border-radius: 2px;
  background: #fff;
  box-shadow: inset 0 0 0 3px #f3f3f3;
}
.option input:checked {
  background: #999;
  box-shadow: inset 0 0 0 2px #fff;
}
.otext {
  flex: 1;
}
.formula {
  display: block;
  margin: 14px 0 15px;
  text-align: center;
  font-family: "Liberation Serif", serif;
  font-size: 18px;
  line-height: 20px;
}
.formula sub {
  font-size: 13px;
  font-style: italic;
  line-height: 0;
  vertical-align: -3px;
}
.op {
  margin: 0 7px;
}
.tail {
  display: block;
}
.marks {
  position: absolute;
  left: 0;
  top: 0;
  width: 760px;
  height: 583px;
  pointer-events: none;
}
.rubbed {
  fill: #fff;
}
.pen {
  fill: none;
  stroke: #22b14c;
  stroke-width: 4;
  stroke-linejoin: round;
  stroke-linecap: round;
}
.pen.red {
  stroke: #ed1c24;
}
.thin {
  stroke-width: 3;
}
.heavy {
  stroke-width: 6;
}
.honor {
  display: flex;
  margin-top: 31px;
}
.honor input[type="checkbox"] {
  display: grid;
  place-items: center;
  width: 18px;
  height: 18px;
  margin: -1px 10px 0 0;
  border-color: #2a6fc9;
  box-shadow: 0 0 0 1px #b7d0f0;
}
.honor input:checked::before {
  content: "";
  width: 6px;
  height: 11px;
  margin-top: -3px;
  border: solid #2a6fc9;
  border-width: 0 3px 3px 0;
  transform: rotate(40deg);
}
.honor label,
.honor a {
  display: block;
}
.honor a {
  margin-top: 8px;
  color: #2a6fc9;
}
.submit {
  display: block;
  width: 168px;
  height: 36px;
  margin: 15px 0 0 auto;
  background: #2073d9;
  color: #fff;
  font-size: 12px;
}
.scrollbar {
  display: flex;
  flex-direction: column;
  align-items: center;
  justify-content: space-between;
  flex: none;
  width: 17px;
  padding: 7px 0;
  background: #f1f1f1;
}
.scrollbar svg {
  width: 8px;
  height: 4px;
  fill: #505050;
}
.track {
  flex: 1;
  display: flex;
  flex-direction: column;
  justify-content: flex-end;
  padding-bottom: 32px;
}
.thumb {
  width: 13px;
  height: 164px;
  background: #c1c1c1;
}
.taskbar {
  display: flex;
  align-items: center;
  flex: none;
  height: 40px;
  padding: 0 1px 0 8px;
  border-top: 1px solid #33415e;
  box-shadow: inset 0 1px #8fa3c9;
  background: linear-gradient(90deg, #1b3567 0, #1d3875 80px, #234391 200px, #25458f 60%, #1f3b78 85%, #1c3570 100%);
}
.start {
  width: 38px;
}
.start svg {
  display: block;
}
.grip {
  width: 8px;
  height: 31px;
  margin: 0 8px 0 11px;
  background: radial-gradient(circle, #0b1c48 1px, transparent 1px) 0 0 / 3px 4px;
}
.pins {
  display: flex;
  margin-right: 3px;
}
.pin {
  width: 62px;
}
.pin svg,
.run svg {
  display: block;
  width: 30px;
  height: 30px;
  margin: auto;
}
.run {
  width: 58px;
  height: 38px;
  margin-right: 4px;
  border: 1px solid #8ea4d2;
  border-radius: 3px;
  background: linear-gradient(160deg, #8b9fcc, #4462a6 45%, #2d4c98);
  box-shadow: 0 0 0 1px #142a5c;
}
.run.active {
  background: linear-gradient(160deg, #dde4f2, #a4b4d9 45%, #8399cd);
}
.run.stacked {
  width: 54px;
  margin-right: 8px;
  box-shadow: 4px 0 0 -1px #4462a6, 4px 0 0 0 #8ea4d2, 0 0 0 1px #142a5c;
}
.trayside {
  margin-left: auto;
}
.lang {
  color: #fff;
  margin-top: -4px;
}
.tray {
  display: flex;
  gap: 8px;
  margin-left: 17px;
}
.tray svg {
  width: 16px;
  height: 16px;
}
.clock {
  display: flex;
  flex-direction: column;
  width: 80px;
  text-align: center;
  line-height: 17px;
  color: #fff;
}
.desktop {
  width: 14px;
  height: 37px;
  border: 1px solid #8496bd;
  background: linear-gradient(#4d6596, #2a4580);
}
</style>
